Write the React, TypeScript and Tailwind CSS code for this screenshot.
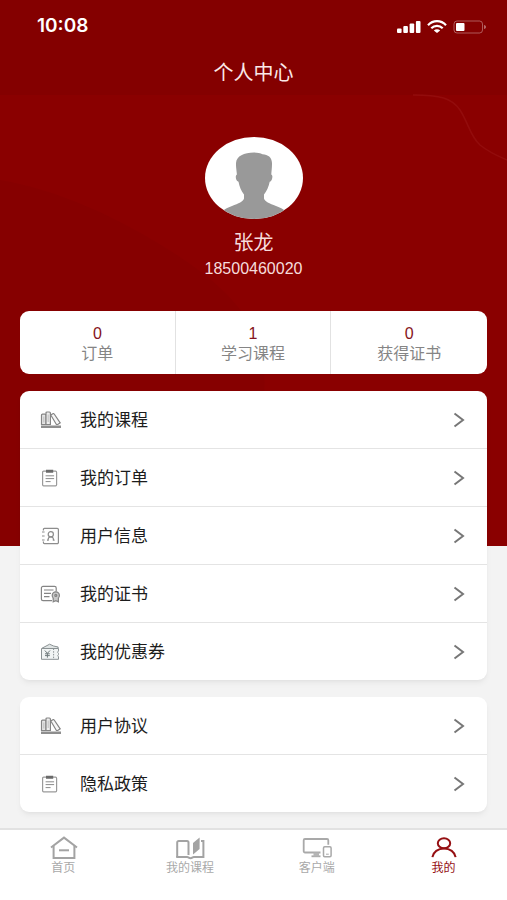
import React from 'react';

interface Stat {
  label: string;
  value: number;
}

interface MenuItem {
  label: string;
  icon: React.FC;
}

interface TabItem {
  label: string;
  icon: React.FC;
  active?: boolean;
}

/* ---------- Menu icons ---------- */

const BooksIcon: React.FC = () => (
  <svg width="22" height="18" viewBox="0 0 22 18" fill="none" stroke="#858585" strokeWidth="1.2">
    <path d="M1.5 13.5V4.200a1 1 0 0 1 1-1h2.500a1 1 0 0 1 1 1v9.300z" fill="#e6e6e6" />
    <path d="M6 13.500V2a1 1 0 0 1 1-1h2.400a1 1 0 0 1 1 1v11.500z" fill="#eee" />
    <path d="M10.800 4l2-1.300a1 1 0 0 1 1.400.3l6 8.800-2.400 1.700h-1.400z" fill="#f6f6f6" />
    <path d="M3.800 5.500v6M8.200 3.500V11" stroke="#c4c4c4" />
    <path d="M1 15.700h20" strokeWidth="2.600" stroke="#8e8e8e" />
  </svg>
);

const ClipboardIcon: React.FC = () => (
  <svg width="22" height="18" viewBox="0 0 22 18" fill="none" stroke="#9a9a9a" strokeWidth="1.2">
    <rect x="2.6" y="2.2" width="14" height="14.6" rx="1" />
    <path d="M6 2.2h7.200" stroke="#6a6a6a" strokeWidth="3" />
    <path d="M5.600 6.800h8.500M5.600 9.600h8.500M5.600 12.600h5" stroke="#8a8a8a" strokeWidth="1" />
  </svg>
);

const ContactIcon: React.FC = () => (
  <svg width="22" height="18" viewBox="0 0 22 18" fill="none" stroke="#8d8d8d" strokeWidth="1.2">
    <path d="M3.4 3.6V2.4a1 1 0 0 1 1-1h12.800a1.200 1.200 0 0 1 1.200 1.200v12.800a1.200 1.200 0 0 1-1.200 1.200H4.400a1 1 0 0 1-1-1v-1.200" />
    <path d="M2 5h2.600M2 9h2.600M2 13h2.600" />
    <circle cx="10.800" cy="7.200" r="2.600" />
    <path d="M7 13.200h1.200c-.2-2.300.8-3.400 2.600-3.400s2.800 1.100 2.600 3.400h1.200" />
  </svg>
);

const CertificateIcon: React.FC = () => (
  <svg width="22" height="18" viewBox="0 0 22 18" fill="none" stroke="#858585" strokeWidth="1.2">
    <path d="M12 15.600H3A1.600 1.600 0 0 1 1.400 14V3A1.600 1.600 0 0 1 3 1.400h11.600A1.600 1.600 0 0 1 16.200 3v3.400" />
    <path d="M4 5h9.500M4 8.300h7M4 11.600h5.500" />
    <circle cx="15.800" cy="10.400" r="3.600" fill="#c9c9c9" />
    <circle cx="15.800" cy="10.400" r="1" />
    <path d="M13.200 13v3.800l2.600-1.200 2.600 1.200V13" fill="#c9c9c9" />
  </svg>
);

const CouponIcon: React.FC = () => (
  <svg width="22" height="18" viewBox="0 0 22 18" fill="none" stroke="#8b9294" strokeWidth="1">
    <path d="M2 5.200l7.600-4 4 1.800 4.600 1-.4 1.500" fill="#dfe4e4" />
    <path d="M1.500 5.500h17v2.400a1.600 1.600 0 0 0 0 2.600v1a1.600 1.600 0 0 0 0 2.400v2.400h-17z" fill="#f1f4f4" />
    <path d="M13.600 5.500v11" strokeDasharray="1.5 1.2" />
    <path d="M4.800 7.500l2.600 2.800L10 7.500M7.400 10.300v4.400M5 10.800h4.800M5 12.600h4.800" stroke="#6f7a7c" />
  </svg>
);

const ChevronIcon: React.FC = () => (
  <svg width="12" height="16" viewBox="0 0 12 16" fill="none" stroke="#777" strokeWidth="2">
    <path d="M1.5 1.500L10 8l-8.500 6.500" />
  </svg>
);

/* ---------- Tab bar icons ---------- */

const HomeIcon: React.FC = () => (
  <svg width="30" height="24" viewBox="0 0 30 24" fill="none" stroke="#a3a3a3" strokeWidth="2">
    <path d="M3 11.500L16 1.600l13 9.900" />
    <path d="M5.600 10v12h20.800V10" />
    <path d="M11 14.300h10" />
  </svg>
);

const BookIcon: React.FC = () => (
  <svg width="30" height="24" viewBox="0 0 30 24" fill="none" stroke="#a3a3a3" strokeWidth="2">
    <path d="M2.200 21V6.500A1.500 1.500 0 0 1 3.700 5H12a1.500 1.500 0 0 1 1.500 1.500V19" />
    <path d="M1.200 21h11c1.300 0 1.800 1.200 3.300 1.200s2-1.200 3.300-1.200h9.600V5H26" />
    <path d="M18 7l6.600-5.400V13L18 18.600z" fill="#a3a3a3" stroke="none" />
  </svg>
);

const DevicesIcon: React.FC = () => (
  <svg width="30" height="24" viewBox="0 0 30 24" fill="none" stroke="#a9a9a9" strokeWidth="1.8">
    <path d="M18.500 16.500H3a1.300 1.300 0 0 1-1.300-1.300V4.300A1.300 1.300 0 0 1 3 3h22a1.300 1.300 0 0 1 1.300 1.300v4.500" />
    <path d="M9.500 20.300h9" />
    <path d="M11.500 16.500h5.500v4h-5.500z" fill="#b5b5b5" stroke="none" />
    <rect x="21.500" y="10.800" width="7.600" height="10" rx="1.200" strokeWidth="1.500" />
    <path d="M24 18.200h2.800" strokeWidth="1" />
  </svg>
);

const UserIcon: React.FC = () => (
  <svg width="30" height="24" viewBox="0 0 30 24" fill="none" stroke="#950f12" strokeWidth="2">
    <ellipse cx="15" cy="7.200" rx="6.200" ry="5" />
    <path d="M3.400 21.200C4.200 16 9 12.400 15 12.400s10.800 3.600 11.600 8.800" />
  </svg>
);

/* ---------- Data ---------- */

const stats: Stat[] = [
  { label: '订单', value: 0 },
  { label: '学习课程', value: 1 },
  { label: '获得证书', value: 0 },
];

const accountMenu: MenuItem[] = [
  { label: '我的课程', icon: BooksIcon },
  { label: '我的订单', icon: ClipboardIcon },
  { label: '用户信息', icon: ContactIcon },
  { label: '我的证书', icon: CertificateIcon },
  { label: '我的优惠券', icon: CouponIcon },
];

const legalMenu: MenuItem[] = [
  { label: '用户协议', icon: BooksIcon },
  { label: '隐私政策', icon: ClipboardIcon },
];

const tabs: TabItem[] = [
  { label: '首页', icon: HomeIcon },
  { label: '我的课程', icon: BookIcon },
  { label: '客户端', icon: DevicesIcon },
  { label: '我的', icon: UserIcon, active: true },
];

/* ---------- Sections ---------- */

const StatusBar: React.FC = () => (
  <div className="flex h-[53px] items-center justify-between pl-[37px] pr-5">
    <span className="font-['Inter'] text-[19px] font-semibold">10:08</span>
    <div className="flex items-center gap-[6px]">
      <svg width="24" height="14" viewBox="0 0 24 14" fill="#fff">
        <rect x="0" y="8.500" width="4.600" height="4.500" rx="1" />
        <rect x="6.300" y="6" width="4.600" height="7" rx="1" />
        <rect x="12.600" y="3.500" width="4.600" height="9.500" rx="1" />
        <rect x="18.900" y="1" width="4.600" height="12" rx="1" />
      </svg>
      <svg width="20" height="14" viewBox="0 0 20 14" fill="none" stroke="#fff" strokeWidth="2.200">
        <path d="M1 5.200C6-.2 14-.2 19 5.200" />
        <path d="M4.300 8.300c3.200-3.300 8.200-3.300 11.400 0" />
        <path d="M10 13L6.800 10.500c1.800-1.600 4.600-1.600 6.400 0z" fill="#fff" stroke="none" />
      </svg>
      <svg width="34" height="14" viewBox="0 0 34 14" fill="none">
        <rect x="1" y="1" width="28.500" height="12" rx="3" stroke="#fff" strokeOpacity="0.35" />
        <rect x="3" y="3" width="8.500" height="8" rx="1" fill="#fff" />
        <path d="M31 5v4c1.300-.3 2-1 2-2s-.7-1.700-2-2z" fill="#fff" fillOpacity="0.4" />
      </svg>
    </div>
  </div>
);

const Backdrop: React.FC = () => (
  <div className="absolute inset-x-0 top-0 h-[546px] bg-[#8a0000]">
    <svg className="h-full w-full" viewBox="0 0 507 546" preserveAspectRatio="none" fill="none">
      <path d="M0 180C60 190 130 222 190 264C230 292 240 310 256 330C280 400 250 480 200 546H0z" fill="#860000" />
      <path d="M0 0H507V95H0z" fill="#840000" />
      <path d="M413 95C440 95 452 98 460 110C469 124 470 136 480 145C490 153 500 157 507 160" stroke="#930c0c" strokeWidth="1.500" />
    </svg>
  </div>
);

const Avatar: React.FC = () => (
  <div className="h-[82px] w-[98px] overflow-hidden rounded-[50%] bg-white">
    <svg width="98" height="82" viewBox="0 0 98 82" fill="#999">
      <path d="M49 15.500c3.500 0 6.500.7 8.500 1.800c5.500.2 9.300 3.200 9.500 8.700c.1 4-.5 8-.7 11.500c1.400.8 1.200 2.700.7 4.500c-.4 1.500-1.200 2.500-2.300 2.700c-.9 5-3 9.300-5.700 12.800v4c.6 3 5.500 5 12 7.500c5 1.800 9 4 14 9v6H13v-6c5-5 9-7.200 14-9c6.500-2.500 11.400-4.500 12-7.500v-4c-2.700-3.500-4.600-7.800-5.500-12.800c-1.200-.4-2-1.400-2.400-2.700c-.5-1.800-.5-3.800.8-4.500c-.2-3.500-1.100-7.500-.9-11.500c.5-7 8-10.500 18-10.500z" />
    </svg>
  </div>
);

const MenuCard: React.FC<{ items: MenuItem[] }> = ({ items }) => (
  <ul className="divide-y divide-[#e4e4e4] overflow-hidden rounded-[9px] bg-white shadow-md shadow-black/5">
    {items.map(({ label, icon: Icon }) => (
      <li key={label}>
        <a href="#" className="flex h-[57px] items-center pl-5 pr-[22px] text-[17px] text-[#1c1c1c]">
          <Icon />
          <span className="ml-[18px] flex-1 pt-[2px]">{label}</span>
          <ChevronIcon />
        </a>
      </li>
    ))}
  </ul>
);

const App: React.FC = () => {
  return (
    <div className="relative flex min-h-screen flex-col bg-[#f3f3f3] font-['Liberation_Sans','Noto_Sans_CJK_SC',sans-serif]">
      <Backdrop />

      <header className="relative h-[95px] text-white">
        <StatusBar />
        <h1 className="text-center text-xl leading-10 text-[#fbe9e9]">个人中心</h1>
      </header>

      <main className="relative flex-1 px-5 pb-4">
        {/* Profile */}
        <section className="flex flex-col items-center pt-[42px] text-[#f6dcdc]">
          <Avatar />
          <h2 className="mt-[10px] text-xl leading-7">张龙</h2>
          <p className="text-base leading-6">18500460020</p>
        </section>

        {/* Stats */}
        <dl className="mt-[30px] grid grid-cols-3 divide-x divide-[#e2e2e2] rounded-[9px] bg-white">
          {stats.map((stat) => (
            <div key={stat.label} className="flex h-[63px] flex-col-reverse items-center justify-center pt-[2px]">
              <dt className="text-base leading-5 text-[#858585]">{stat.label}</dt>
              <dd className="text-base leading-5 text-[#851420]">{stat.value}</dd>
            </div>
          ))}
        </dl>

        <div className="mt-[17px] flex flex-col gap-[17px]">
          <MenuCard items={accountMenu} />
          <MenuCard items={legalMenu} />
        </div>
      </main>

      {/* Tab bar */}
      <nav className="relative grid h-[72px] grid-cols-4 border-t-2 border-[#e2e2e2] bg-white pt-[6px]">
        {tabs.map(({ label, icon: Icon, active }) => (
          <a
            key={label}
            href="#"
            className={`flex flex-col items-center text-xs ${active ? 'text-[#950f12]' : 'text-[#a9a9a9]'}`}
          >
            <Icon />
            <span className="leading-4">{label}</span>
          </a>
        ))}
      </nav>
    </div>
  );
};

export default App;
